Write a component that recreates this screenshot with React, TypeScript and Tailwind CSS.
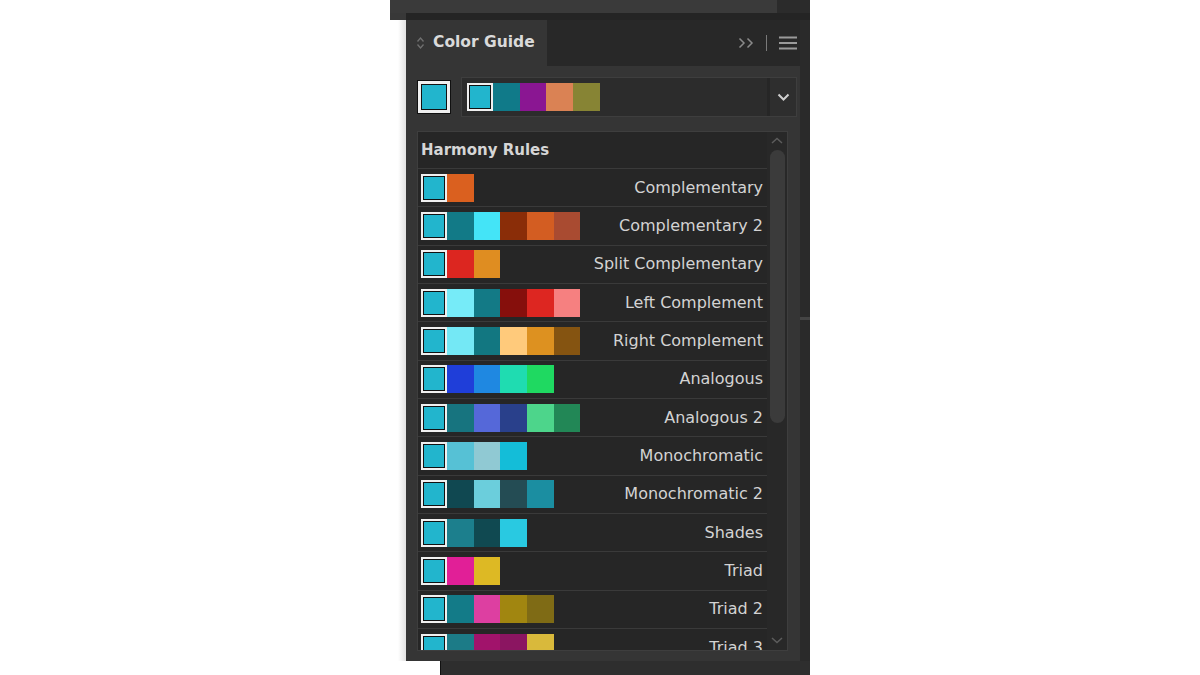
import React from "react";

const BASE = "#22b5cd";

const rules: [string, string[]][] = [
  ["Complementary", ["#da601f"]],
  ["Complementary 2", ["#127a87", "#44e4f7", "#8a2d08", "#d35d22", "#a94b31"]],
  ["Split Complementary", ["#dc2620", "#df8d21"]],
  ["Left Complement", ["#76ebf8", "#137a86", "#860f0c", "#dd2621", "#f68080"]],
  ["Right Complement", ["#74e8f5", "#127781", "#ffca7b", "#dd9120", "#855411"]],
  ["Analogous", ["#1f3ed9", "#1f88e1", "#1fdcb1", "#1fd961"]],
  ["Analogous 2", ["#17747f", "#5568d9", "#29408b", "#4dd58b", "#228756"]],
  ["Monochromatic", ["#56c1d5", "#90c9d3", "#14bdd8"]],
  ["Monochromatic 2", ["#104851", "#6bcedc", "#244c54", "#1b8ea1"]],
  ["Shades", ["#1c7f8d", "#104951", "#29c9e1"]],
  ["Triad", ["#e11f97", "#ddb924"]],
  ["Triad 2", ["#137b88", "#dd3fa1", "#a18610", "#7f6b15"]],
  ["Triad 3", ["#1c7b87", "#a1136b", "#8b1561", "#d9b93b"]],
];

function BaseSwatch() {
  return (
    <div className="h-[28px] w-[26px] shrink-0 border-2 border-[#f0f0f0]">
      <div className="h-full w-full border-[1.5px] border-[#111]" style={{ background: BASE }} />
    </div>
  );
}

function Row({ name, colors }: { name: string; colors: string[] }) {
  return (
    <div className="flex h-[38.33px] shrink-0 items-center border-t-[1.5px] border-[#3a3a3a] pl-[3px] pr-[4px]">
      <BaseSwatch />
      {colors.map((c, i) => (
        <div key={i} className="h-[28px] w-[26.67px] shrink-0" style={{ background: c }} />
      ))}
      <div className="flex-1 text-right text-[16px] leading-none text-[#d3d3d3]">{name}</div>
    </div>
  );
}

export default function App() {
  return (
    <div
      className="flex h-[675px] w-[1200px] overflow-hidden bg-white"
      style={{ fontFamily: '"DejaVu Sans", sans-serif' }}
    >
      <div className="w-[390px] shrink-0" />
      <div className="flex w-[420px] shrink-0 flex-col">
        {/* window behind */}
        <div className="flex h-[13px]">
          <div className="flex-1 bg-[#3a3a3a]" />
          <div className="w-[33px] bg-[#2b2b2b]" />
        </div>
        <div className="flex h-[7px]">
          <div className="w-[16px] bg-[#383838]" />
          <div className="flex-1 bg-[#242424]" />
        </div>

        <div className="flex h-[641px]">
          <div className="w-[16px] bg-gradient-to-r from-white via-white to-[#e2e2e2]" />

          {/* panel */}
          <div className="flex w-[394px] flex-col bg-[#353535]">
            <div className="flex h-[46px] bg-[#282828]">
              <div className="flex w-[141px] items-center bg-[#353535] pl-[10px]">
                <svg width="9" height="14" viewBox="0 0 9 14" fill="none" stroke="#707070" strokeWidth="1.3">
                  <path d="M1.5 5.5 L4.5 2 L7.5 5.5" />
                  <path d="M1.5 8.5 L4.5 12 L7.5 8.5" />
                </svg>
                <span className="ml-[8px] text-[15.5px] font-bold text-[#dadada]">Color Guide</span>
              </div>
              <div className="flex flex-1 items-center justify-end pr-[3px]">
                <svg width="18" height="12" viewBox="0 0 18 12" fill="none" stroke="#8a8a8a" strokeWidth="1.5">
                  <path d="M1.5 1.5 L6 6 L1.5 10.5" />
                  <path d="M9.5 1.5 L14 6 L9.5 10.5" />
                </svg>
                <div className="ml-[10px] h-[16px] w-px bg-[#7a7a7a]" />
                <svg className="ml-[12px]" width="18" height="14" viewBox="0 0 18 14" stroke="#9a9a9a" strokeWidth="1.8">
                  <path d="M0 1.5 H18 M0 7 H18 M0 12.5 H18" />
                </svg>
              </div>
            </div>

            <div className="flex flex-1 flex-col pt-[11px]">
              <div className="flex h-[40px] items-center pl-[11px] pr-[3px]">
                <div className="h-[34px] w-[34px] shrink-0 border border-[#111] bg-[#f0f0f0] p-[3px]">
                  <div className="h-full w-full border border-[#111]" style={{ background: BASE }} />
                </div>
                <div className="ml-[10px] flex h-[40px] flex-1 border border-[#3e3e3e] bg-[#2c2c2c]">
                  <div className="flex flex-1 items-center pl-[5px]">
                    <BaseSwatch />
                    {["#107a89", "#8a1692", "#da8254", "#878434"].map((c) => (
                      <div key={c} className="h-[28px] w-[26.67px]" style={{ background: c }} />
                    ))}
                  </div>
                  <div className="flex w-[29px] items-center justify-center border-l-[3px] border-[#262626] bg-[#2e2e2e]">
                    <svg width="13" height="9" viewBox="0 0 13 9" fill="none" stroke="#cfcfcf" strokeWidth="2">
                      <path d="M1.5 1.5 L6.5 6.5 L11.5 1.5" />
                    </svg>
                  </div>
                </div>
              </div>

              <div className="ml-[11px] mt-[14px] flex h-[520px] w-[371px] overflow-hidden border border-[#3e3e3e] bg-[#262626]">
                <div className="flex flex-1 flex-col">
                  <div className="flex h-[36px] shrink-0 items-center pl-[3px] text-[15px] font-bold text-[#d6d6d6]">
                    Harmony Rules
                  </div>
                  {rules.map(([n, c]) => (
                    <Row key={n} name={n} colors={c} />
                  ))}
                </div>
                <div className="flex w-[20px] flex-col items-center bg-[#282828]">
                  <svg className="mt-[5px]" width="12" height="7" viewBox="0 0 12 7" fill="none" stroke="#5c5c5c" strokeWidth="1.5">
                    <path d="M1 6 L6 1.5 L11 6" />
                  </svg>
                  <div className="mt-[6px] h-[273px] w-[15px] rounded-full bg-[#3b3b3b]" />
                  <div className="flex-1" />
                  <svg className="mb-[6px]" width="12" height="7" viewBox="0 0 12 7" fill="none" stroke="#5c5c5c" strokeWidth="1.5">
                    <path d="M1 1 L6 5.5 L11 1" />
                  </svg>
                </div>
              </div>
            </div>
          </div>

          <div className="flex w-[10px] flex-col bg-[#2a2a2a]">
            <div className="h-[297px]" />
            <div className="h-[3px] bg-[#444]" />
          </div>
        </div>

        <div className="flex flex-1">
          <div className="w-[50px] bg-white" />
          <div className="flex-1 border-l border-[#111] bg-[#2e2e2e]" />
        </div>
      </div>
    </div>
  );
}
